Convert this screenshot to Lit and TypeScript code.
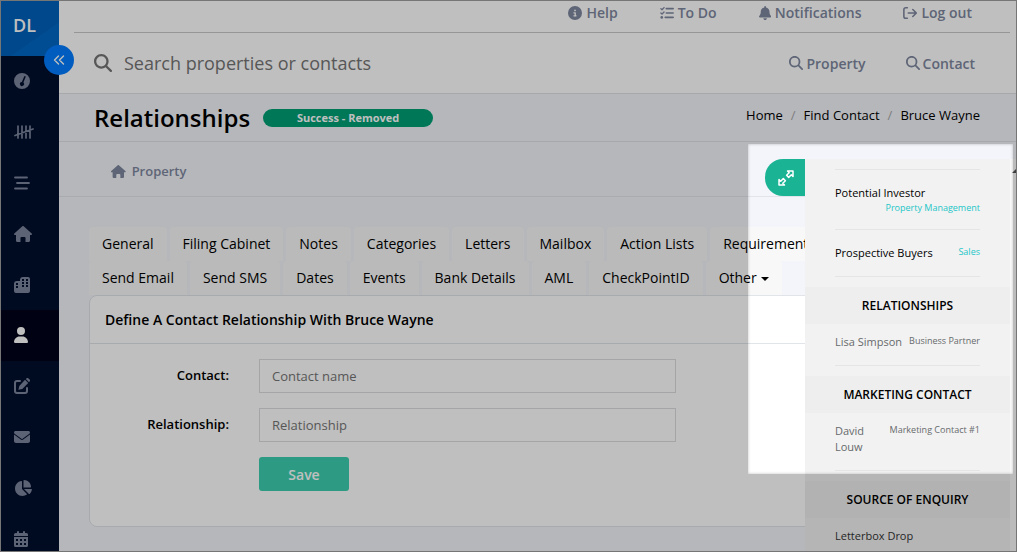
import { LitElement, html, css, svg, nothing } from "lit";
import { customElement, property } from "lit/decorators.js";

const ICONS: Record<string, { box: string; art: unknown }> = {
  search: {
    box: "0 0 512 512",
    art: svg`<path d="M416 208c0 45.9-14.9 88.3-40 122.7L502.6 457.4c12.5 12.5 12.5 32.8 0 45.3s-32.8 12.5-45.3 0L330.7 376c-34.4 25.2-76.8 40-122.7 40C93.1 416 0 322.9 0 208S93.1 0 208 0S416 93.1 416 208zM208 352a144 144 0 1 0 0-288 144 144 0 1 0 0 288z"/>`,
  },
  info: {
    box: "0 0 512 512",
    art: svg`<path d="M256 512A256 256 0 1 0 256 0a256 256 0 1 0 0 512zM216 336h24V272H216c-13.3 0-24-10.7-24-24s10.7-24 24-24h48c13.3 0 24 10.7 24 24v88h8c13.3 0 24 10.7 24 24s-10.7 24-24 24H216c-13.3 0-24-10.7-24-24s10.7-24 24-24zm40-208a32 32 0 1 1 0 64 32 32 0 1 1 0-64z"/>`,
  },
  todo: {
    box: "0 0 16 16",
    art: svg`<g fill="none" stroke="currentColor" stroke-linecap="round" stroke-linejoin="round"><path stroke-width="1.5" d="M1 3l1.3 1.3L4.6 1.8M1 8l1.3 1.3L4.6 6.8"/><path stroke-width="1.9" d="M7.2 3h7.8M7.2 8h7.8M6 13h9"/></g><circle cx="2" cy="13" r="1.5"/>`,
  },
  bell: {
    box: "0 0 448 512",
    art: svg`<path d="M224 0c-17.7 0-32 14.3-32 32V51.2C119 66 64 130.6 64 208v18.8c0 47-17.3 92.4-48.5 127.6l-7.4 8.3c-8.4 9.4-10.4 22.9-5.3 34.4S19.4 416 32 416H416c12.6 0 24-7.4 29.2-18.9s3.1-25-5.3-34.4l-7.4-8.3C401.3 319.2 384 273.9 384 226.8V208c0-77.4-55-142-128-156.8V32c0-17.7-14.3-32-32-32zm45.3 493.3c12-12 18.7-28.3 18.7-45.3H224 160c0 17 6.7 33.3 18.7 45.3s28.3 18.7 45.3 18.7s33.3-6.7 45.3-18.7z"/>`,
  },
  logout: {
    box: "0 0 16 16",
    art: svg`<path fill="none" stroke="currentColor" stroke-width="1.8" stroke-linecap="round" stroke-linejoin="round" d="M5 2H3a2 2 0 0 0-2 2v8a2 2 0 0 0 2 2h2M6 8h9M11.2 4l4 4-4 4"/>`,
  },
  gauge: {
    box: "0 0 16 16",
    art: svg`<path fill-rule="evenodd" d="M8 0a8 8 0 1 0 0 16A8 8 0 0 0 8 0zM11.200 3.100a.8.8 0 0 0-1 .4L7.900 9a2 2 0 1 0 1.500.6l2.200-5.500a.8.8 0 0 0-.4-1z"/>`,
  },
  tally: {
    box: "0 0 20 16",
    art: svg`<path fill="none" stroke="currentColor" stroke-width="1.700" stroke-linecap="round" d="M4 2v12M8 2v12M12 2v12M16 2v12M1 11.500L19 5"/>`,
  },
  lines: {
    box: "0 0 16 16",
    art: svg`<path fill="none" stroke="currentColor" stroke-width="1.800" stroke-linecap="round" d="M1 2.500h12M3 8h12M1 13.500h12"/>`,
  },
  home: {
    box: "0 0 18 16",
    art: svg`<path d="M8.300.3a1 1 0 0 1 1.400 0l8 7.200c.7.7.3 1.500-.6 1.500h-1.100v5.500c0 .9-.6 1.500-1.500 1.500H11.500v-4a1 1 0 0 0-1-1h-3a1 1 0 0 0-1 1v4H3.500C2.600 16 2 15.400 2 14.500V9H.9C0 9-.4 8.200.3 7.500z"/>`,
  },
  city: {
    box: "0 0 16 16",
    art: svg`<path fill-rule="evenodd" d="M6 5V3a3 3 0 0 1 3-3h5a2 2 0 0 1 2 2v12a2 2 0 0 1-2 2H2a2 2 0 0 1-2-2V7a3 3 0 0 1 3-3h3zM8 2v2h2V2zM12 2v2h2V2zM8 5v2h2V5zM12 5v2h2V5zM8 8v2h2V8zM12 8v2h2V8zM2 6v2h2V6zM2 9v2h2V9z"/>`,
  },
  user: {
    box: "0 0 448 512",
    art: svg`<path d="M224 256A128 128 0 1 0 224 0a128 128 0 1 0 0 256zm-45.7 48C79.8 304 0 383.8 0 482.3C0 498.7 13.3 512 29.7 512H418.3c16.4 0 29.7-13.300 29.7-29.700C448 383.8 368.2 304 269.7 304H178.3z"/>`,
  },
  edit: {
    box: "0 0 16 16",
    art: svg`<path fill="none" stroke="currentColor" stroke-width="2" stroke-linecap="round" d="M6 3H3a2 2 0 0 0-2 2v8a2 2 0 0 0 2 2h8a2 2 0 0 0 2-2v-3"/><path d="M11 1.800L14.200 5l-5.900 5.900-3.900.9.900-3.900zM11.800 1l.6-.6a1.500 1.500 0 0 1 2.100 0l1.100 1.100a1.500 1.500 0 0 1 0 2.100l-.6.6z"/>`,
  },
  mail: {
    box: "0 0 512 512",
    art: svg`<path d="M48 64C21.5 64 0 85.5 0 112c0 15.1 7.1 29.3 19.2 38.4L236.8 313.6c11.4 8.5 27 8.5 38.4 0L492.8 150.4c12.1-9.1 19.2-23.3 19.2-38.4c0-26.5-21.5-48-48-48H48zM0 176V384c0 35.3 28.7 64 64 64H448c35.3 0 64-28.7 64-64V176L294.4 339.2c-22.8 17.1-54 17.1-76.8 0L0 176z"/>`,
  },
  pie: {
    box: "0 0 576 512",
    art: svg`<path d="M304 240V16.6c0-9 7-16.6 16-16.6C443.7 0 544 100.3 544 224c0 9-7.6 16-16.6 16H304zM32 272C32 150.7 122.1 50.3 239 34.3c9.2-1.3 17 6.1 17 15.4V288L412.5 444.5c6.7 6.7 6.2 17.7-1.5 23.1C371.8 495.6 323.8 512 272 512C139.5 512 32 404.6 32 272zm526.4 16c9.3 0 16.6 7.8 15.4 17c-7.7 55.9-34.6 105.6-73.9 142.3c-6 5.6-15.4 5.2-21.2-.7L320 288H558.4z"/>`,
  },
  calendar: {
    box: "0 0 14 16",
    art: svg`<path fill-rule="evenodd" d="M3 1a1 1 0 0 1 2 0v1h4V1a1 1 0 0 1 2 0v1h1.500A1.500 1.500 0 0 1 14 3.500V5H0V3.500A1.500 1.500 0 0 1 1.500 2H3zM0 6h14v8.500a1.500 1.500 0 0 1-1.500 1.500h-11A1.500 1.500 0 0 1 0 14.500zM2 8v2h2V8zM6 8v2h2V8zM10 8v2h2V8zM2 12v2h2v-2zM6 12v2h2v-2zM10 12v2h2v-2z"/>`,
  },
  collapse: {
    box: "0 0 12 12",
    art: svg`<path fill="none" stroke="currentColor" stroke-width="1.400" stroke-linecap="round" stroke-linejoin="round" d="M5.500 2L1.500 6l4 4M10.500 2l-4 4 4 4"/>`,
  },
  expand: {
    box: "0 0 16 16",
    art: svg`<path fill="none" stroke="currentColor" stroke-width="1.500" stroke-linejoin="round" d="M9.500 1h5.500v5.500l-1.700-1.700-2.600 2.600-2.100-2.100 2.600-2.600zM6.500 15H1V9.500l1.700 1.700 2.600-2.600 2.100 2.100-2.600 2.600z"/>`,
  },
};

@customElement("ui-icon")
export class UiIcon extends LitElement {
  @property() name = "";

  static styles = css`
    :host {
      display: inline-flex;
      flex: none;
      height: 14px;
    }
    .glyph {
      display: block;
      height: 100%;
      width: auto;
      fill: currentColor;
    }
  `;

  render() {
    const icon = ICONS[this.name];
    return icon
      ? html`<svg class="glyph" viewBox=${icon.box} aria-hidden="true">${icon.art}</svg>`
      : nothing;
  }
}

@customElement("contact-panel")
export class ContactPanel extends LitElement {
  static styles = css`
    :host {
      display: block;
      background: #f2f2f2;
      color: #000;
      font-size: 11px;
      line-height: 16px;
    }
    .rows {
      margin: 0;
      padding: 10px 30px;
      list-style: none;
    }
    .row {
      display: flow-root;
      padding-bottom: 15px;
      border-bottom: 1px solid #e4e5e7;
    }
    .interests .row {
      padding-top: 15px;
    }
    .interests .row:first-child {
      border-top: 1px solid #e4e5e7;
    }
    .tag {
      float: right;
      font-size: 9px;
      line-height: 13px;
      color: #23c6c8;
    }
    .muted,
    .muted .tag {
      color: #676a6c;
    }
    .pair {
      display: flex;
      justify-content: space-between;
      gap: 4px;
    }
    .pair .tag {
      flex: none;
    }
    .heading {
      margin: 0;
      background: #eee;
      font-size: 12px;
      line-height: 37px;
      font-weight: 600;
      text-align: center;
    }
    .plain {
      color: #333;
    }
  `;

  render() {
    return html`
      <ul class="rows interests">
        <li class="row">Potential Investor <span class="tag">Property Management</span></li>
        <li class="row">Prospective Buyers <span class="tag">Sales</span></li>
      </ul>
      <h2 class="heading">RELATIONSHIPS</h2>
      <ul class="rows muted">
        <li class="row pair"><span>Lisa Simpson</span><span class="tag">Business Partner</span></li>
      </ul>
      <h2 class="heading">MARKETING CONTACT</h2>
      <ul class="rows muted">
        <li class="row pair"><span>David Louw</span><span class="tag">Marketing Contact #1</span></li>
      </ul>
      <h2 class="heading">SOURCE OF ENQUIRY</h2>
      <ul class="rows">
        <li class="plain">Letterbox Drop</li>
      </ul>
    `;
  }
}

const SIDE = ["gauge", "tally", "lines", "home", "city", "user", "edit", "mail", "pie", "calendar"];
const SIDE_LABELS = ["Dashboard", "Tally", "Lists", "Properties", "Buildings", "Contacts", "Edit", "Mail", "Reports", "Calendar"];
const TABS = [
  "General", "Filing Cabinet", "Notes", "Categories", "Letters", "Mailbox", "Action Lists", "Requirements",
  "Send Email", "Send SMS", "Dates", "Events", "Bank Details", "AML", "CheckPointID", "Other",
];

@customElement("app-root")
export class AppRoot extends LitElement {
  static styles = css`
    :host {
      display: block;
      box-sizing: border-box;
      height: 100vh;
      border: 1px solid #767676;
      font-family: "Open Sans", sans-serif;
      font-size: 14px;
      color: #000;
    }
    * {
      box-sizing: border-box;
    }
    a {
      color: inherit;
      text-decoration: none;
    }
    .page {
      position: relative;
      display: flex;
      height: 100%;
      overflow: hidden;
      background: #f3f5fa;
    }
    .sidebar {
      flex: none;
      width: 58px;
      background: #000e2c;
      color: #7a849c;
    }
    .brand {
      display: block;
      height: 55px;
      padding-left: 12px;
      background: linear-gradient(145deg, #0061bb 65%, #0067c4 65%);
      color: #fff;
      font-size: 18px;
      font-weight: 600;
      line-height: 48px;
    }
    .menu {
      display: grid;
      grid-auto-rows: 1fr;
      height: 508px;
      margin: 0;
      padding: 0;
      list-style: none;
    }
    .menu-link {
      display: flex;
      align-items: center;
      height: 100%;
      padding-left: 13px;
    }
    .menu-link ui-icon {
      height: 16px;
    }
    .menu-link.current {
      background: #00031a;
      color: #fff;
    }
    .collapse {
      position: absolute;
      left: 43px;
      top: 44px;
      display: grid;
      place-items: center;
      width: 30px;
      height: 30px;
      padding: 0;
      border: 0;
      border-radius: 50%;
      background: #007bff;
      color: #fff;
    }
    .collapse ui-icon {
      height: 12px;
    }
    .main {
      flex: 1;
      min-width: 0;
    }
    .top {
      background: #fff;
      color: #7e879e;
      font-weight: 600;
      border-bottom: 1px solid #dfe1e5;
    }
    .top-links {
      display: flex;
      justify-content: flex-end;
      gap: 42px;
      height: 32px;
      margin: 0 6px 0 15px;
      padding: 2px 38px 0 0;
      border-bottom: 1px solid #c8c8c8;
      line-height: 20px;
    }
    .link {
      display: flex;
      align-items: center;
      gap: 4px;
      height: 20px;
    }
    .search-row {
      display: flex;
      align-items: center;
      height: 60px;
      padding: 0 41px 0 35px;
    }
    .search-row > ui-icon {
      height: 18px;
      color: #757575;
    }
    .search-input {
      flex: 1;
      min-width: 0;
      margin-left: 12px;
      padding: 0;
      border: 0;
      outline: 0;
      background: none;
      font: 400 18px "Open Sans", sans-serif;
    }
    .search-input::placeholder,
    .field::placeholder {
      color: #757575;
      opacity: 1;
    }
    .finders {
      display: flex;
      gap: 40px;
    }
    .finders .link {
      gap: 3px;
    }
    .title-row {
      display: flex;
      align-items: center;
      height: 48px;
      padding: 0 36px 0 35px;
      border-bottom: 1px solid #dfe1e5;
    }
    .title {
      margin: 0;
      font-size: 24px;
      font-weight: 600;
      line-height: 32px;
    }
    .badge {
      width: 170px;
      margin-left: 13px;
      border-radius: 9px;
      background: #00a076;
      color: #fff;
      font-size: 11px;
      font-weight: 700;
      line-height: 18px;
      text-align: center;
    }
    .crumbs {
      display: flex;
      gap: 8px;
      margin-left: auto;
      padding-bottom: 6px;
      font-size: 13px;
      line-height: 20px;
    }
    .slash {
      color: #a8a8a8;
    }
    .sub-row {
      display: flex;
      align-items: center;
      height: 55px;
      padding: 4px 0 0 52px;
      border-bottom: 1px solid #e1e4ea;
      color: #7e879e;
      font-size: 13px;
      font-weight: 600;
    }
    .sub-row .link {
      gap: 6px;
    }
    .sub-row ui-icon {
      height: 13px;
    }
    .content {
      padding: 30px 30px 24px;
    }
    .tabs {
      display: flex;
      flex-wrap: wrap;
      column-gap: 3px;
      margin-right: 100px;
    }
    .tab {
      padding: 0 13px;
      border-radius: 4px 4px 0 0;
      background: #f8f8f8;
      line-height: 34px;
    }
    .more::after {
      content: "";
      display: inline-block;
      margin-left: 4px;
      border: 4px solid transparent;
      border-top-color: #000;
      border-bottom: 0;
      vertical-align: 2px;
    }
    .card {
      border: 1px solid #e1e4e8;
      border-radius: 8px;
      background: #fff;
    }
    .card-title {
      margin: 0;
      padding: 0 15px;
      border-bottom: 1px solid #e1e4e8;
      font-size: 14px;
      font-weight: 600;
      line-height: 47px;
    }
    .form {
      display: grid;
      grid-template-columns: 124px minmax(0, 417px);
      gap: 15px 30px;
      padding: 15px 15px 35px;
    }
    .label {
      font-size: 13px;
      font-weight: 600;
      line-height: 32px;
      text-align: right;
    }
    .field {
      width: 100%;
      height: 34px;
      padding: 0 12px;
      border: 1px solid #dcdde0;
      border-radius: 0;
      outline: 0;
      background: #fff;
      font: 400 13px "Open Sans", sans-serif;
    }
    .save {
      grid-column: 2;
      justify-self: start;
      width: 90px;
      height: 34px;
      padding: 0;
      border: 0;
      border-radius: 3px;
      background: #3dcfaf;
      color: #fff;
      font: 600 14px "Open Sans", sans-serif;
    }
    .drawer {
      position: absolute;
      top: 158px;
      right: 0;
      bottom: 0;
      display: flex;
      align-items: flex-start;
    }
    .expand {
      display: grid;
      place-items: center;
      width: 40px;
      height: 37px;
      padding: 0 0 0 2px;
      border: 0;
      border-radius: 18px 0 0 18px;
      background: #1ab394;
      color: #fff;
    }
    .expand ui-icon {
      height: 16px;
    }
    .drawer-body {
      width: 205px;
      height: 100%;
      overflow: hidden;
      background: #f2f2f2;
    }
    .track {
      width: 6px;
      height: 100%;
      overflow: hidden;
      background: #fafafa;
    }
    .arrow {
      width: 10px;
      margin: 9px 0 0 2px;
      border: 5px solid transparent;
      border-top: 0;
      border-bottom-color: #505050;
    }
    .spotlight {
      position: absolute;
      top: 143px;
      right: 3px;
      width: 265px;
      height: 330px;
      box-shadow: 0 0 0 2000px rgba(0, 0, 0, 0.25), inset 0 0 3px rgba(0, 0, 0, 0.25);
      pointer-events: none;
    }
  `;

  render() {
    return html`
      <div class="page">
        <nav class="sidebar" aria-label="Main">
          <a class="brand" href="#">DL</a>
          <ul class="menu">
            ${SIDE.map(
              (name, i) => html`<li>
                <a class="menu-link ${name === "user" ? "current" : ""}" href="#" aria-label=${SIDE_LABELS[i]}>
                  <ui-icon name=${name}></ui-icon>
                </a>
              </li>`
            )}
          </ul>
        </nav>
        <main class="main">
          <header class="top">
            <nav class="top-links">
              <a class="link" href="#"><ui-icon name="info"></ui-icon>Help</a>
              <a class="link" href="#"><ui-icon name="todo"></ui-icon>To Do</a>
              <a class="link" href="#"><ui-icon name="bell"></ui-icon>Notifications</a>
              <a class="link" href="#"><ui-icon name="logout"></ui-icon>Log out</a>
            </nav>
            <div class="search-row">
              <ui-icon name="search"></ui-icon>
              <input class="search-input" type="search" aria-label="Search" placeholder="Search properties or contacts" />
              <div class="finders">
                <a class="link" href="#"><ui-icon name="search"></ui-icon>Property</a>
                <a class="link" href="#"><ui-icon name="search"></ui-icon>Contact</a>
              </div>
            </div>
          </header>
          <div class="title-row">
            <h1 class="title">Relationships</h1>
            <span class="badge">Success - Removed</span>
            <nav class="crumbs" aria-label="Breadcrumb">
              <a href="#">Home</a><span class="slash">/</span>
              <a href="#">Find Contact</a><span class="slash">/</span>
              <a href="#">Bruce Wayne</a>
            </nav>
          </div>
          <div class="sub-row">
            <a class="link" href="#"><ui-icon name="home"></ui-icon>Property</a>
          </div>
          <div class="content">
            <nav class="tabs">
              ${TABS.map((t) => html`<a class="tab ${t === "Other" ? "more" : ""}" href="#">${t}</a>`)}
            </nav>
            <section class="card">
              <h2 class="card-title">Define A Contact Relationship With Bruce Wayne</h2>
              <form class="form">
                <label class="label" for="contact">Contact:</label>
                <input class="field" id="contact" placeholder="Contact name" />
                <label class="label" for="relationship">Relationship:</label>
                <input class="field" id="relationship" placeholder="Relationship" />
                <button class="save" type="button">Save</button>
              </form>
            </section>
          </div>
        </main>
        <button class="collapse" aria-label="Collapse menu"><ui-icon name="collapse"></ui-icon></button>
        <aside class="drawer">
          <button class="expand" aria-label="Expand panel"><ui-icon name="expand"></ui-icon></button>
          <div class="drawer-body"><contact-panel></contact-panel></div>
          <div class="track"><div class="arrow"></div></div>
        </aside>
        <div class="spotlight"></div>
      </div>
    `;
  }
}
